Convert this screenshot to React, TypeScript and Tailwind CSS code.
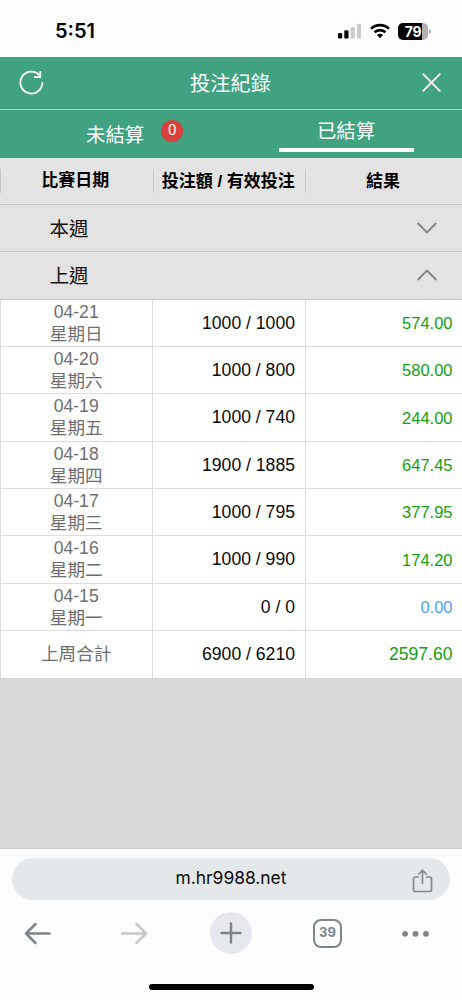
import React from 'react';

interface Bet {
  date: string;
  day: string;
  amount: string;
  result: string;
}

const bets: Bet[] = [
  { date: '04-21', day: '星期日', amount: '1000 / 1000', result: '574.00' },
  { date: '04-20', day: '星期六', amount: '1000 / 800', result: '580.00' },
  { date: '04-19', day: '星期五', amount: '1000 / 740', result: '244.00' },
  { date: '04-18', day: '星期四', amount: '1900 / 1885', result: '647.45' },
  { date: '04-17', day: '星期三', amount: '1000 / 795', result: '377.95' },
  { date: '04-16', day: '星期二', amount: '1000 / 990', result: '174.20' },
  { date: '04-15', day: '星期一', amount: '0 / 0', result: '0.00' },
];

const StatusBar: React.FC = () => (
  <div className="h-[57px] shrink-0 flex items-center justify-between pl-[55px] pr-[31px] pt-[5px] font-['Inter',sans-serif]">
    <span className="text-[20px] leading-6 font-semibold text-black">5:51</span>
    <div className="flex items-center gap-[8px]">
      <svg width="24" height="16" viewBox="0 0 24 16">
        <rect x="0" y="10" width="4.2" height="5.5" rx="1.2" fill="#000" />
        <rect x="6.3" y="7.2" width="4.2" height="8.3" rx="1.2" fill="#000" />
        <rect x="12.6" y="4" width="4.2" height="11.5" rx="1.2" fill="#ccc" />
        <rect x="18.9" y="0.7" width="4.2" height="14.8" rx="1.2" fill="#ccc" />
      </svg>
      <svg width="20" height="16" viewBox="0 0 20 16" fill="none" stroke="#000" strokeWidth="2.8">
        <path d="M1.1 5.7a12.9 12.9 0 0 1 17.8 0" />
        <path d="M4.5 9.3a8 8 0 0 1 11 0" />
        <path d="M10 15.2l-3-3.1a4.4 4.4 0 0 1 6 0z" fill="#000" stroke="none" />
      </svg>
      <div className="flex items-center gap-px">
        <div className="w-[30px] h-[17px] rounded-[5px] bg-[linear-gradient(90deg,#000_80%,#b0b0b0_80%)] text-white text-[14px] leading-[17px] font-bold text-center tracking-[-0.3px]">79</div>
        <div className="w-[2px] h-[5px] rounded-r-full bg-[#b0b0b0]"></div>
      </div>
    </div>
  </div>
);

const Chevron: React.FC<{ up?: boolean }> = ({ up }) => (
  <svg width="20" height="12" viewBox="0 0 20 12" fill="none" stroke="#808080" strokeWidth="1.8">
    <path d={up ? 'M.7 11L10 1.5L19.3 11' : 'M.7 1L10 10.5L19.3 1'} />
  </svg>
);

const WeekRow: React.FC<{ label: string; open?: boolean }> = ({ label, open }) => (
  <div className="h-[47.35px] flex items-center justify-between border-b border-[#c6c6c6] bg-[#e3e3e3] pl-[49.5px] pr-[25px]">
    <span className="text-[19.5px] leading-6 text-[#111] pt-px">{label}</span>
    <Chevron up={open} />
  </div>
);

const BrowserBar: React.FC = () => (
  <div className="flex-1 border-t border-[#cacaca] bg-[#fdfdfd] px-3 pt-[9px] flex flex-col font-['Inter',sans-serif]">
    <div className="h-[42px] rounded-full bg-[#e4e8eb] flex items-center pl-[38px] pr-[17px]">
      <span className="flex-1 text-center text-[17.4px] leading-6 text-[#0b0b0b] pb-[2px]">m.hr9988.net</span>
      <svg className="mt-[3px]" width="21" height="24" viewBox="0 0 21 24" fill="none" stroke="#858b90" strokeWidth="1.7">
        <path d="M7 8H3.5Q1.5 8 1.5 10V20.5Q1.5 22.5 3.5 22.5H17.5Q19.5 22.5 19.5 20.5V10Q19.5 8 17.5 8H14" />
        <path d="M10.5 15V1.5M6.3 5.5L10.5 1.3L14.7 5.5" />
      </svg>
    </div>
    <div className="mt-[12px] h-[42px] flex items-center pl-[11px]">
      <svg width="28" height="24" viewBox="0 0 28 24" fill="none" stroke="#7d858b" strokeWidth="2.5" strokeLinecap="round" strokeLinejoin="round">
        <path d="M26.5 12.5H3M12.5 3L3 12.5L12.5 22" />
      </svg>
      <svg className="ml-[69px]" width="28" height="24" viewBox="0 0 28 24" fill="none" stroke="#c7c8c9" strokeWidth="2.5" strokeLinecap="round" strokeLinejoin="round">
        <path d="M2 12.5H26M16.5 3L26 12.5L16.5 22" />
      </svg>
      <div className="ml-[62px] size-[42px] rounded-full bg-[#e7e8ed] flex items-center justify-center">
        <svg width="22" height="22" viewBox="0 0 22 22" stroke="#7d858b" strokeWidth="2.5" strokeLinecap="round">
          <path d="M11 1.5V20.5M1.5 11H20.5" />
        </svg>
      </div>
      <div className="ml-[61px] size-[29px] rounded-[8px] border-[2.5px] border-[#7d858b] flex items-center justify-center text-[13px] font-bold text-[#7d858b]">39</div>
      <svg className="ml-[60px]" width="28" height="7" viewBox="0 0 28 7" fill="#7d858b">
        <circle cx="3.1" cy="3.8" r="2.9" />
        <circle cx="13.5" cy="3.8" r="2.9" />
        <circle cx="24" cy="3.8" r="2.9" />
      </svg>
    </div>
    <div className="mt-[30px] mx-auto w-[165px] h-[6px] rounded-full bg-black"></div>
  </div>
);

const App: React.FC = () => {
  return (
    <div className="w-full h-[1000px] flex flex-col overflow-hidden bg-[#fdfdfd] font-['Liberation_Sans','Noto_Sans_CJK_TC',sans-serif]">
      <StatusBar />

      <header className="h-[53px] shrink-0 bg-[#40a281] border-b border-[#b5d8ca] flex items-center justify-between pl-[19px] pr-[21px] text-white">
        <svg className="mb-[2px]" width="25" height="25" viewBox="0 0 25 25" fill="none" stroke="#fff" strokeWidth="1.8">
          <path d="M23.4 12.3A11 11 0 1 1 20.6 5.2" />
          <path d="M21.3 1V7H15" />
        </svg>
        <h1 className="text-[20.2px] leading-6 mr-[5px] pt-[2px]">投注紀錄</h1>
        <svg className="mb-[2px]" width="19" height="19" viewBox="0 0 19 19" stroke="#fff" strokeWidth="1.8">
          <path d="M.7.7L18.3 18.3M18.3.7L.7 18.3" />
        </svg>
      </header>

      <nav className="h-[47.5px] shrink-0 bg-[#40a281] text-white text-[19.4px] leading-6 flex">
        <div className="w-1/2 flex items-start pl-[86px] pt-[12px]">
          <span className="pt-px">未結算</span>
          <span className="ml-[17px] mt-[-2px] size-[22px] rounded-full bg-[#d9413a] text-[15px] leading-[21px] text-center font-['Roboto',sans-serif]">0</span>
        </div>
        <div className="w-1/2 flex flex-col items-center pt-[9px]">
          <span className="pr-px">已結算</span>
          <div className="mt-[5px] w-[135px] h-[4px] bg-white"></div>
        </div>
      </nav>

      <main className="h-[690.5px] shrink-0 bg-[#d7d7d7]">
        <div className="h-[47.35px] flex items-center bg-[#e3e3e3] border-b border-[#c6c6c6] text-[17px] leading-[26px] font-bold text-black text-center">
          <div className="w-[152.5px] h-6 border-l border-[#c6c6c6] pr-[3px] leading-6">比賽日期</div>
          <div className="w-[152.5px] h-6 border-l border-[#c6c6c6] pr-[2px] whitespace-nowrap">投注額 / 有效投注</div>
          <div className="flex-1 h-6 border-l border-[#c6c6c6] pr-[2px]">結果</div>
        </div>
        <WeekRow label="本週" />
        <WeekRow label="上週" open />

        {bets.map((bet) => (
          <div key={bet.date} className="h-[47.35px] flex border-b border-[#dcdcdc] bg-white text-[17.6px]">
            <div className="w-[152.4px] border-l border-[#dcdcdc] flex flex-col items-center text-[#6e6e6e] leading-[22px] pr-px pt-px">
              <span>{bet.date}</span>
              <span>{bet.day}</span>
            </div>
            <div className="w-[152.6px] border-l border-[#dcdcdc] flex items-center justify-end pr-[10px] text-[#0a0a0a]">{bet.amount}</div>
            <div className={`flex-1 border-l border-[#dcdcdc] flex items-center justify-end pr-[9.5px] pt-px text-[16.5px] ${bet.result === '0.00' ? 'text-[#4a9ff5]' : 'text-[#12a012]'}`}>
              {bet.result}
            </div>
          </div>
        ))}

        <div className="h-[47.35px] flex bg-white text-[17.6px]">
          <div className="w-[152.4px] border-l border-[#dcdcdc] flex items-center justify-center text-[#6e6e6e] pr-px">上周合計</div>
          <div className="w-[152.6px] border-l border-[#dcdcdc] flex items-center justify-end pr-[10px] text-[#0a0a0a]">6900 / 6210</div>
          <div className="flex-1 border-l border-[#dcdcdc] flex items-center justify-end pr-[9.5px] text-[#12a012]">2597.60</div>
        </div>
      </main>

      <BrowserBar />
    </div>
  );
};

export default App;
